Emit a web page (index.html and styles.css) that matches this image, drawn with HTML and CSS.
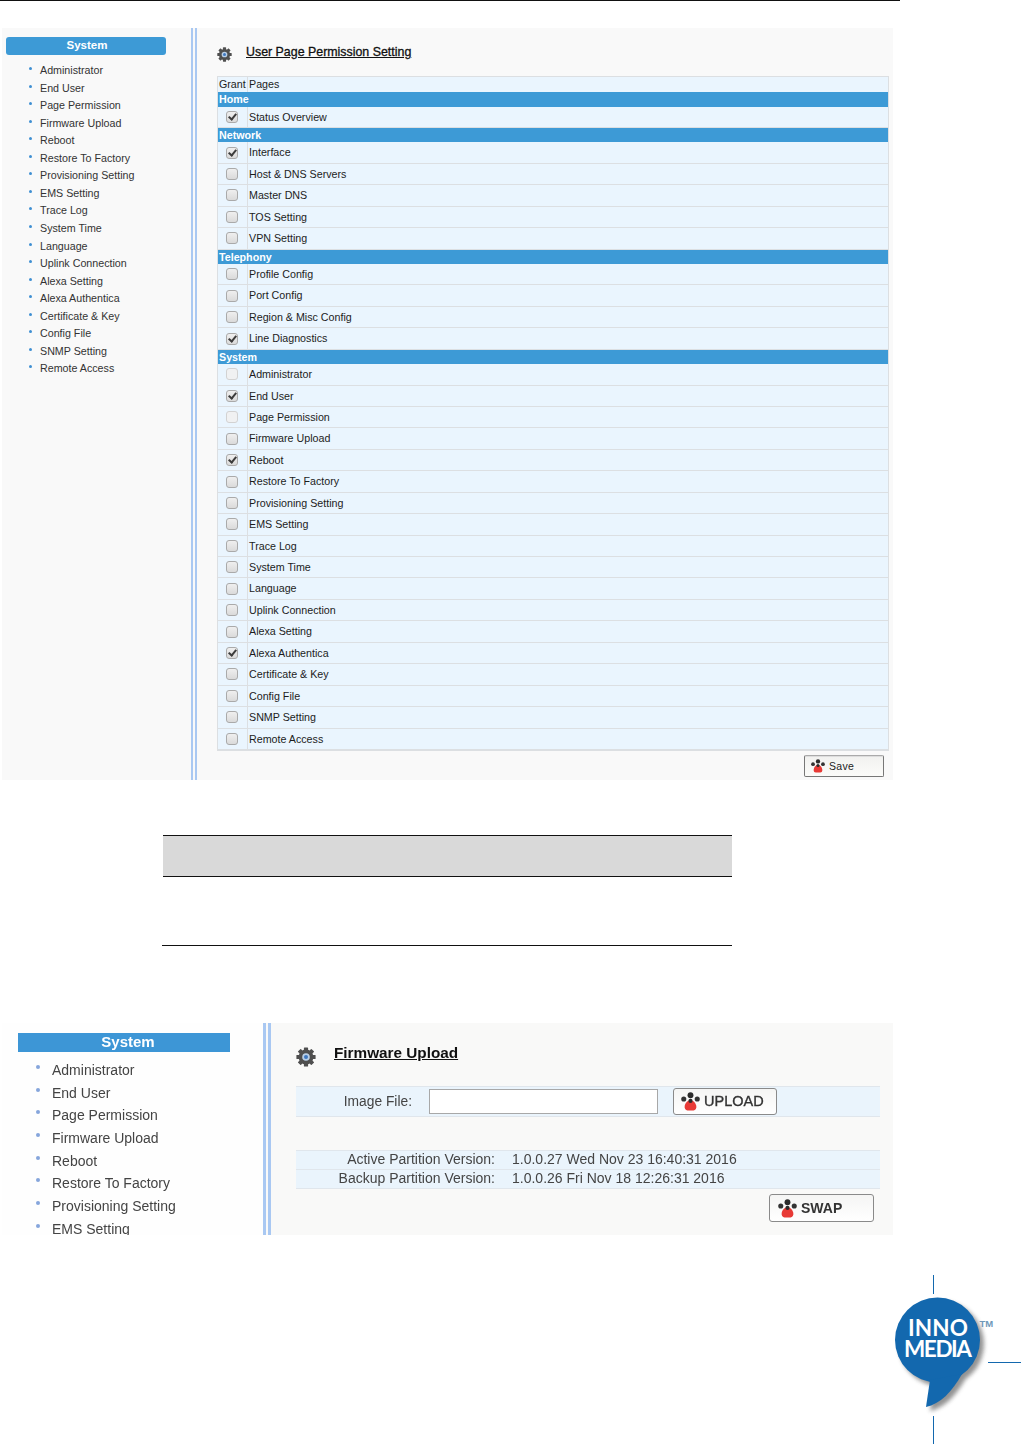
FILE: index.html
```html
<!DOCTYPE html>
<html lang="en">
<head>
<meta charset="utf-8">
<title>User Page Permission Setting</title>
<link rel="stylesheet" href="styles.css">
</head>
<body>
<svg class="defs" width="0" height="0" aria-hidden="true">
  <symbol id="gear" viewBox="0 0 20 20">
    <g fill="#4f4f4f">
      <circle cx="10" cy="10" r="7.400"/>
      <rect x="7.900" y="0.400" width="4.200" height="19.200" rx="0.600"/>
      <rect x="7.900" y="0.400" width="4.200" height="19.200" rx="0.600" transform="rotate(45 10 10)"/>
      <rect x="7.900" y="0.400" width="4.200" height="19.200" rx="0.600" transform="rotate(90 10 10)"/>
      <rect x="7.900" y="0.400" width="4.200" height="19.200" rx="0.600" transform="rotate(135 10 10)"/>
    </g>
    <circle cx="10" cy="10" r="3.800" fill="#b9cfe6"/>
    <circle cx="10" cy="10" r="2" fill="#3f78c0"/>
  </symbol>
  <symbol id="paw" viewBox="0 0 20 20">
    <circle cx="10" cy="3.400" r="3.100" fill="#2b2b2b"/>
    <circle cx="2.900" cy="7.400" r="2.700" fill="#333"/>
    <circle cx="17.100" cy="7.400" r="2.700" fill="#333"/>
    <path d="M10 8.600c3.100 0 5.400 2.800 6.100 6 .6 2.800-.9 4.800-2.900 4.800H6.800c-2 0-3.500-2-2.900-4.800.7-3.200 3-6 6.100-6z" fill="#e83a36"/>
    <circle cx="10" cy="9.400" r="2.200" fill="#2b2b2b"/>
  </symbol>
</svg>

<div class="top-rule"></div>

<section class="shot shot-a">
  <aside class="side">
    <h2 class="side-head">System</h2>
    <ul class="side-list">
      <li>Administrator</li>
      <li>End User</li>
      <li>Page Permission</li>
      <li>Firmware Upload</li>
      <li>Reboot</li>
      <li>Restore To Factory</li>
      <li>Provisioning Setting</li>
      <li>EMS Setting</li>
      <li>Trace Log</li>
      <li>System Time</li>
      <li>Language</li>
      <li>Uplink Connection</li>
      <li>Alexa Setting</li>
      <li>Alexa Authentica</li>
      <li>Certificate &amp; Key</li>
      <li>Config File</li>
      <li>SNMP Setting</li>
      <li>Remote Access</li>
    </ul>
  </aside>
  <div class="rule-double"></div>
  <main class="main">
    <div class="title-row">
      <svg class="gear"><use href="#gear"/></svg>
      <h1 class="title">User Page Permission Setting</h1>
    </div>
    <div class="perm">
      <div class="row head"><span class="c1">Grant</span><span class="c2">Pages</span></div>
      <div class="band">Home</div>
      <div class="row"><span class="c1"><i class="box on"></i></span><span class="c2">Status Overview</span></div>
      <div class="band">Network</div>
      <div class="row"><span class="c1"><i class="box on"></i></span><span class="c2">Interface</span></div>
      <div class="row"><span class="c1"><i class="box"></i></span><span class="c2">Host &amp; DNS Servers</span></div>
      <div class="row"><span class="c1"><i class="box"></i></span><span class="c2">Master DNS</span></div>
      <div class="row"><span class="c1"><i class="box"></i></span><span class="c2">TOS Setting</span></div>
      <div class="row"><span class="c1"><i class="box"></i></span><span class="c2">VPN Setting</span></div>
      <div class="band">Telephony</div>
      <div class="row"><span class="c1"><i class="box"></i></span><span class="c2">Profile Config</span></div>
      <div class="row"><span class="c1"><i class="box"></i></span><span class="c2">Port Config</span></div>
      <div class="row"><span class="c1"><i class="box"></i></span><span class="c2">Region &amp; Misc Config</span></div>
      <div class="row"><span class="c1"><i class="box on"></i></span><span class="c2">Line Diagnostics</span></div>
      <div class="band">System</div>
      <div class="row"><span class="c1"><i class="box dim"></i></span><span class="c2">Administrator</span></div>
      <div class="row"><span class="c1"><i class="box on"></i></span><span class="c2">End User</span></div>
      <div class="row"><span class="c1"><i class="box dim"></i></span><span class="c2">Page Permission</span></div>
      <div class="row"><span class="c1"><i class="box"></i></span><span class="c2">Firmware Upload</span></div>
      <div class="row"><span class="c1"><i class="box on"></i></span><span class="c2">Reboot</span></div>
      <div class="row"><span class="c1"><i class="box"></i></span><span class="c2">Restore To Factory</span></div>
      <div class="row"><span class="c1"><i class="box"></i></span><span class="c2">Provisioning Setting</span></div>
      <div class="row"><span class="c1"><i class="box"></i></span><span class="c2">EMS Setting</span></div>
      <div class="row"><span class="c1"><i class="box"></i></span><span class="c2">Trace Log</span></div>
      <div class="row"><span class="c1"><i class="box"></i></span><span class="c2">System Time</span></div>
      <div class="row"><span class="c1"><i class="box"></i></span><span class="c2">Language</span></div>
      <div class="row"><span class="c1"><i class="box"></i></span><span class="c2">Uplink Connection</span></div>
      <div class="row"><span class="c1"><i class="box"></i></span><span class="c2">Alexa Setting</span></div>
      <div class="row"><span class="c1"><i class="box on"></i></span><span class="c2">Alexa Authentica</span></div>
      <div class="row"><span class="c1"><i class="box"></i></span><span class="c2">Certificate &amp; Key</span></div>
      <div class="row"><span class="c1"><i class="box"></i></span><span class="c2">Config File</span></div>
      <div class="row"><span class="c1"><i class="box"></i></span><span class="c2">SNMP Setting</span></div>
      <div class="row"><span class="c1"><i class="box"></i></span><span class="c2">Remote Access</span></div>
    </div>
    <div class="save-row">
      <button class="btn btn-save" type="button"><svg class="paw"><use href="#paw"/></svg>Save</button>
    </div>
  </main>
</section>

<div class="blank-table">
  <div class="blank-head"></div>
  <div class="blank-body"></div>
</div>

<section class="shot shot-b">
  <aside class="side-b">
    <h2 class="side-head-b">System</h2>
    <ul class="side-list-b">
      <li>Administrator</li>
      <li>End User</li>
      <li>Page Permission</li>
      <li>Firmware Upload</li>
      <li>Reboot</li>
      <li>Restore To Factory</li>
      <li>Provisioning Setting</li>
      <li>EMS Setting</li>
    </ul>
  </aside>
  <div class="rule-double-b"></div>
  <div class="main-b">
    <div class="title-row-b">
      <svg class="gear-b"><use href="#gear"/></svg>
      <h1 class="title-b">Firmware Upload</h1>
    </div>
    <div class="upload-row">
      <span class="upload-label">Image File:</span>
      <span class="file-box"></span>
      <button class="btn btn-big btn-upload" type="button"><svg class="paw-b"><use href="#paw"/></svg>UPLOAD</button>
    </div>
    <div class="versions">
      <div class="ver-row"><span class="ver-label">Active Partition Version:</span><span>1.0.0.27 Wed Nov 23 16:40:31 2016</span></div>
      <div class="ver-row"><span class="ver-label">Backup Partition Version:</span><span>1.0.0.26 Fri Nov 18 12:26:31 2016</span></div>
    </div>
    <div class="swap-row">
      <button class="btn btn-big btn-swap" type="button"><svg class="paw-b"><use href="#paw"/></svg>SWAP</button>
    </div>
  </div>
</section>

<footer class="foot">
  <svg class="logo" viewBox="870 1265 151 180" width="151" height="180" role="img" aria-label="InnoMedia logo">
    <defs>
      <filter id="soft" x="-20%" y="-20%" width="140%" height="140%"><feGaussianBlur stdDeviation="2.200"/></filter>
    </defs>
    <g stroke="#1368ae" stroke-width="1" fill="none">
      <path d="M933.500 1275v19M933.500 1416v28M988 1362.500h33"/>
    </g>
    <g fill="#808080" filter="url(#soft)" opacity=".85">
      <circle cx="941.500" cy="1344" r="42.500"/>
      <path d="M966 1378C956 1396 944 1408 930 1411L934 1384Z"/>
    </g>
    <g fill="#1368ae">
      <circle cx="937.500" cy="1340" r="42.500"/>
      <path d="M962 1374C952 1392 940 1404 926 1407L930 1380Z"/>
    </g>
    <text class="logo-text" x="938" y="1336" text-anchor="middle" textLength="60" lengthAdjust="spacing">INNO</text>
    <text class="logo-text" x="938" y="1357" text-anchor="middle" textLength="68" lengthAdjust="spacing">MEDIA</text>
    <text class="logo-tm" x="979.500" y="1326.500">TM</text>
  </svg>
</footer>
</body>
</html>
```
FILE: styles.css
```css
html, body {
  margin: 0;
  padding: 0;
  height: 1445px;
  overflow: hidden;
  background: #fff;
}
body {
  font-family: "Liberation Sans", Arial, sans-serif;
  color: #222;
}
.defs { position: absolute; }
ul { list-style: none; margin: 0; padding: 0; }
h1, h2 { margin: 0; }

.top-rule { width: 900px; height: 1px; background: #111; }

.shot { display: flex; margin-left: 2px; width: 891px; }

/* first screenshot */
.shot-a { margin-top: 27px; height: 752px; background: #f9f9f9; }
.side { width: 189px; flex: none; padding: 9px 0 0 4px; box-sizing: border-box; }
.side-head {
  width: 160px; height: 18px; line-height: 17px; padding-left: 2px; box-sizing: border-box;
  background: #3d9ad6; color: #fff; border-radius: 3px;
  font-size: 11.500px; font-weight: 700; text-align: center;
}
.side-list { margin-top: 7.100px; }
.side-list li {
  height: 17.550px; line-height: 17.550px;
  padding-left: 34px; position: relative;
  font-size: 10.700px; color: #333;
}
.side-list li::before {
  content: ""; position: absolute; left: 23px; top: 5px;
  width: 3px; height: 3px; border-radius: 50%; background: #3f8fd2;
}
.rule-double {
  width: 2px; flex: none;
  border-left: 2px solid #a9c8f2; border-right: 2px solid #a9c8f2;
}
.main { flex: 1; padding: 0 0 0 20px; min-width: 0; }
.title-row { display: flex; align-items: center; height: 48px; }
.gear { width: 15px; height: 15px; margin-top: 4px; flex: none; }
.title {
  margin-left: 14px; font-size: 12.400px; font-weight: 400;
  color: #111; text-decoration: underline; -webkit-text-stroke: .3px #111;
}
.perm {
  width: 672px; box-sizing: border-box;
  border: 1px solid #dcdfe2; background: #eaf5fe;
  font-size: 10.700px; color: #1c1c1c;
}
.row {
  display: grid; grid-template-columns: 30px 1fr;
  height: 21.450px; box-sizing: border-box;
  border-bottom: 1px solid #dcdfe2;
}
.row.head { height: 15.150px; border-bottom: 0; }
.row.head .c1 { display: block; padding: 0 0 0 1px; }
.c1 {
  display: flex; align-items: center; justify-content: center;
  border-right: 1px solid #dcdfe2; line-height: 15px; padding-right: 1.500px;
}
.c2 { padding-left: 1px; line-height: 20.500px; }
.row.head .c2 { line-height: 15px; }
.band {
  height: 14.400px; line-height: 14px; padding-left: 1px;
  background: #3d9ad6; color: #fff; font-weight: 700; font-size: 10.700px;
}
.box {
  display: block; width: 10px; height: 10px; position: relative;
  border: 1px solid #aaa; border-radius: 3px;
  background: linear-gradient(#efefef, #dadada);
}
.box.dim { border-color: #d2d2d2; background: #f0f1f2; }
.box.on::after {
  content: ""; position: absolute; left: 3px; top: 0;
  width: 3px; height: 6px;
  border: solid #3c3c3c; border-width: 0 2px 2px 0;
  transform: rotate(40deg);
}
.save-row { display: flex; justify-content: flex-end; width: 667px; margin-top: 4px; }
.btn {
  display: flex; align-items: center; padding: 0; margin: 0;
  background: linear-gradient(#f1f1ef, #fbfbf9);
  border: 1px solid #9a9a9a; border-radius: 2px; color: #222;
  font-family: "Liberation Sans", Arial, sans-serif;
  box-sizing: border-box;
}
.btn-save {
  width: 80px; height: 22px; padding-left: 6px; font-size: 10.500px;
  letter-spacing: .3px; border-color: #aaa #777 #777 #777;
  box-shadow: inset 0 1px 0 #ddd;
}
.paw { width: 14px; height: 14px; margin-right: 4px; flex: none; }

/* blank table */
.blank-table { margin: 55px 0 0 162px; width: 570px; }
.blank-head {
  margin-left: 1px; height: 40px; background: #d9d9d9;
  border-top: 1px solid #111; border-bottom: 1px solid #111;
}
.blank-body { height: 68px; border-bottom: 1px solid #111; }

/* second screenshot */
.shot-b {
  margin-top: 77px; height: 212px; overflow: hidden; background: #f9f9f8;
  filter: blur(.35px);
}
.side-b { width: 261px; flex: none; background: #fefefe; padding: 10px 0 0 16px; box-sizing: border-box; }
.side-head-b {
  width: 212px; height: 19px; line-height: 18px; padding-left: 8px; box-sizing: border-box;
  background: #3d96d6; color: #fff; font-size: 15px; font-weight: 700; text-align: center;
}
.side-list-b { margin-top: 7px; }
.side-list-b li {
  height: 22.700px; line-height: 22.700px; padding-left: 34px; position: relative;
  font-size: 14px; color: #444;
}
.side-list-b li::before {
  content: ""; position: absolute; left: 18px; top: 6px;
  width: 4px; height: 4px; border-radius: 50%; background: #86a6dc;
}
.rule-double-b {
  width: 2px; flex: none;
  border-left: 3px solid #a9c8f2; border-right: 3px solid #a9c8f2;
}
.main-b { flex: 1; min-width: 0; padding: 0 0 0 25px; }
.title-row-b { display: flex; align-items: center; height: 63px; }
.gear-b { width: 20px; height: 20px; margin-top: 5px; flex: none; }
.title-b {
  margin: 0 0 3px 18px; font-size: 15.300px; font-weight: 700; color: #111;
  text-decoration: underline;
}
.upload-row {
  width: 584px; height: 31px; box-sizing: border-box; display: flex; align-items: center;
  background: #eaf4fc; border-top: 1px solid #e0e6ec; border-bottom: 1px solid #e0e6ec;
}
.upload-label {
  width: 116px; text-align: right; font-size: 13.800px; color: #444; flex: none; margin-bottom: 1px;
}
.file-box {
  width: 229px; height: 25px; margin-left: 17px; box-sizing: border-box;
  border: 1px solid #a8a8a8; background: #fff; flex: none;
}
.btn-big { font-weight: 700; color: #333; border-color: #8a8a8a; border-radius: 3px; background: linear-gradient(#f5f5f4, #fff); }
.btn-upload {
  width: 104px; height: 27px; margin-left: 15px;
  padding: 0 0 1px 7px; font-size: 14.500px; font-weight: 400; -webkit-text-stroke: .35px #333;
}
.paw-b { width: 19px; height: 19px; margin-right: 4px; flex: none; }
.versions {
  width: 584px; margin-top: 33px; background: #eaf4fc;
  border-top: 1px solid #e0e6ec; font-size: 14px; color: #444;
}
.ver-row {
  display: flex; height: 19px; line-height: 17px; box-sizing: border-box;
  border-bottom: 1px solid #e0e6ec; white-space: nowrap;
}
.ver-label { width: 199px; text-align: right; margin-right: 17px; flex: none; }
.swap-row { display: flex; justify-content: flex-end; width: 578px; margin-top: 5px; }
.btn-swap { width: 105px; height: 28px; padding-left: 8px; font-size: 14px; }

/* logo */
.foot { display: flex; justify-content: flex-end; margin-top: 30px; }
.logo { display: block; }
.logo-text { font-family: "Lato", "Open Sans", sans-serif; font-weight: 700; font-size: 22.500px; fill: #fff; }
.logo-tm { font-family: "Liberation Sans", Arial, sans-serif; font-weight: 700; font-size: 9.500px; fill: #6f98b8; }
```
